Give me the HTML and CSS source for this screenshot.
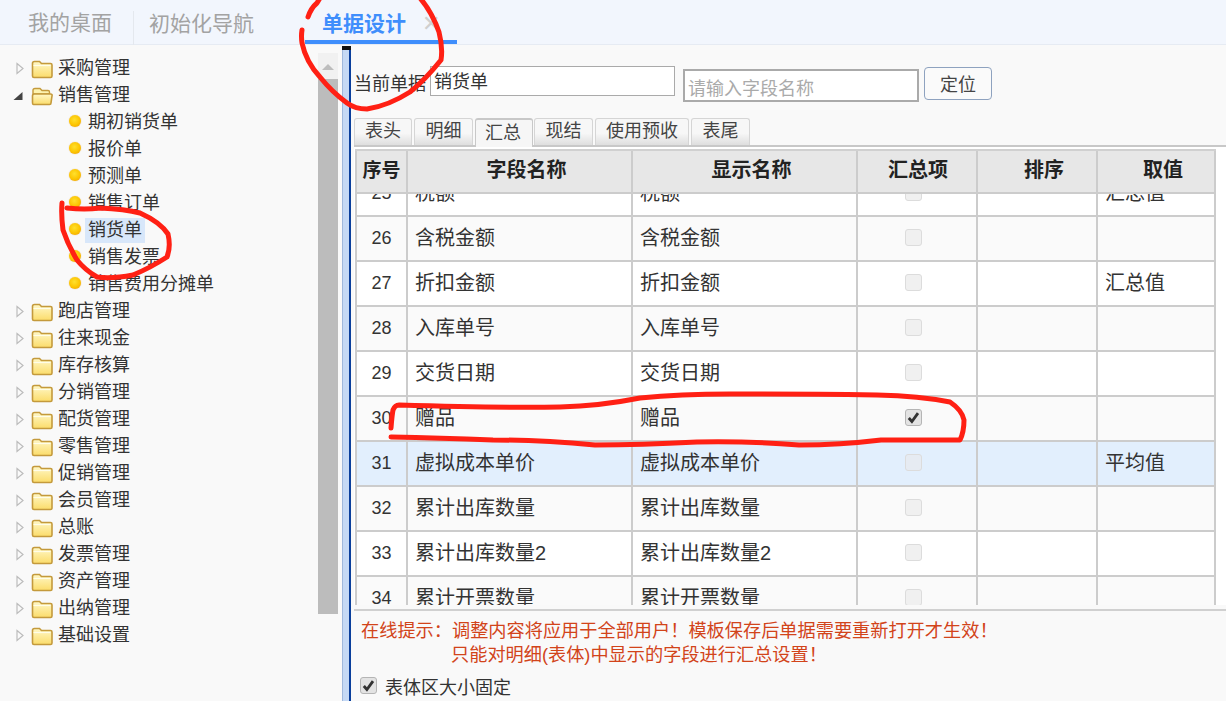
FILE: index.html
```html
<!DOCTYPE html>
<html lang="zh-CN">
<head>
<meta charset="utf-8">
<title>单据设计</title>
<link rel="stylesheet" href="styles.css">
</head>
<body>
<svg width="0" height="0" class="defs">
  <defs>
    <linearGradient id="fg" x1="0" y1="0" x2="0" y2="1"><stop offset="0" stop-color="#fff8c8"/><stop offset="1" stop-color="#fbdc6a"/></linearGradient>
    <symbol id="closed" viewBox="0 0 22 20"><path d="M1.500 4.500q0-2 2-2h5l2 2h9q1.500 0 1.500 1.500v11q0 1.500-1.500 1.500h-16.500q-1.500 0-1.500-1.500z" fill="url(#fg)" stroke="#c49a3c" stroke-width="1.600"/><path d="M2.500 6.500h17" stroke="#fffde8" stroke-width="1.200"/></symbol>
    <symbol id="open" viewBox="0 0 22 20"><path d="M2 4.500q0-2 2-2h5l2 2h6q1.500 0 1.500 1.500v2h-16.500z" fill="#fdf3b0" stroke="#c49a3c" stroke-width="1.400"/><path d="M1.500 16v-6q0-2 2-2h16q2 0 1.500 2l-1 7q0 1.500-1.500 1.500h-16q-1 0-1-2.500z" fill="url(#fg)" stroke="#c49a3c" stroke-width="1.600"/></symbol>
    <symbol id="right" viewBox="0 0 8 12"><path d="M1 1l6 5-6 5z" fill="#fafafa" stroke="#bcbcbc" stroke-width="1.200"/></symbol>
    <symbol id="down" viewBox="0 0 10 10"><path d="M9.500 1v8h-9z" fill="#444"/></symbol>
    <symbol id="tick" viewBox="0 0 16 16"><path d="M3 8.500l3.300 3.800 6.500-9" fill="none" stroke="#333" stroke-width="3"/></symbol>
  </defs>
</svg>
<div class="app">
  <header class="topbar">
    <span class="toptab first">我的桌面</span>
    <span class="toptab second">初始化导航</span>
    <span class="toptab active">单据设计<span class="close">✕</span></span>
  </header>
  <div class="workspace">
    <aside class="sidebar">
      <ul class="tree">
        <li class="node"><svg class="tri"><use href="#right"/></svg><svg class="folder"><use href="#closed"/></svg>采购管理</li>
        <li class="node"><svg class="tri tri-down"><use href="#down"/></svg><svg class="folder"><use href="#open"/></svg>销售管理</li>
        <li class="leaf"><i class="dot"></i><span class="lbl">期初销货单</span></li>
        <li class="leaf"><i class="dot"></i><span class="lbl">报价单</span></li>
        <li class="leaf"><i class="dot"></i><span class="lbl">预测单</span></li>
        <li class="leaf"><i class="dot"></i><span class="lbl">销售订单</span></li>
        <li class="leaf"><i class="dot"></i><span class="lbl sel">销货单</span></li>
        <li class="leaf"><i class="dot"></i><span class="lbl">销售发票</span></li>
        <li class="leaf"><i class="dot"></i><span class="lbl">销售费用分摊单</span></li>
        <li class="node"><svg class="tri"><use href="#right"/></svg><svg class="folder"><use href="#closed"/></svg>跑店管理</li>
        <li class="node"><svg class="tri"><use href="#right"/></svg><svg class="folder"><use href="#closed"/></svg>往来现金</li>
        <li class="node"><svg class="tri"><use href="#right"/></svg><svg class="folder"><use href="#closed"/></svg>库存核算</li>
        <li class="node"><svg class="tri"><use href="#right"/></svg><svg class="folder"><use href="#closed"/></svg>分销管理</li>
        <li class="node"><svg class="tri"><use href="#right"/></svg><svg class="folder"><use href="#closed"/></svg>配货管理</li>
        <li class="node"><svg class="tri"><use href="#right"/></svg><svg class="folder"><use href="#closed"/></svg>零售管理</li>
        <li class="node"><svg class="tri"><use href="#right"/></svg><svg class="folder"><use href="#closed"/></svg>促销管理</li>
        <li class="node"><svg class="tri"><use href="#right"/></svg><svg class="folder"><use href="#closed"/></svg>会员管理</li>
        <li class="node"><svg class="tri"><use href="#right"/></svg><svg class="folder"><use href="#closed"/></svg>总账</li>
        <li class="node"><svg class="tri"><use href="#right"/></svg><svg class="folder"><use href="#closed"/></svg>发票管理</li>
        <li class="node"><svg class="tri"><use href="#right"/></svg><svg class="folder"><use href="#closed"/></svg>资产管理</li>
        <li class="node"><svg class="tri"><use href="#right"/></svg><svg class="folder"><use href="#closed"/></svg>出纳管理</li>
        <li class="node"><svg class="tri"><use href="#right"/></svg><svg class="folder"><use href="#closed"/></svg>基础设置</li>
      </ul>
    </aside>
    <div class="scrollbar"><div class="arrow"></div><div class="thumb"></div></div>
    <div class="splitter"><div class="grip"></div></div>
    <main class="main">
      <div class="formrow">
        <label class="curlabel">当前单据</label>
        <div class="curinput">销货单</div>
        <div class="search">请输入字段名称</div>
        <button class="locate">定位</button>
      </div>
      <nav class="tabs">
        <span class="tab w1">表头</span>
        <span class="tab w2">明细</span>
        <span class="tab w1 on">汇总</span>
        <span class="tab w2 after-on">现结</span>
        <span class="tab w3">使用预收</span>
        <span class="tab w2">表尾</span>
      </nav>
      <div class="grid">
        <div class="grid-head">
          <div class="gh c1">序号</div><div class="gh c2">字段名称</div><div class="gh c2">显示名称</div><div class="gh c3 plain">汇总项</div><div class="gh c3">排序</div><div class="gh c3 lastc">取值</div>
        </div>
        <div class="grid-body">
          <div class="rows">
            <div class="row"><div class="cell c1 num">25</div><div class="cell c2">税额</div><div class="cell c2">税额</div><div class="cell c3 mid"><span class="cb"></span></div><div class="cell c3"></div><div class="cell c3 lastc">汇总值</div></div>
            <div class="row alt"><div class="cell c1 num">26</div><div class="cell c2">含税金额</div><div class="cell c2">含税金额</div><div class="cell c3 mid"><span class="cb"></span></div><div class="cell c3"></div><div class="cell c3 lastc"></div></div>
            <div class="row"><div class="cell c1 num">27</div><div class="cell c2">折扣金额</div><div class="cell c2">折扣金额</div><div class="cell c3 mid"><span class="cb"></span></div><div class="cell c3"></div><div class="cell c3 lastc">汇总值</div></div>
            <div class="row alt"><div class="cell c1 num">28</div><div class="cell c2">入库单号</div><div class="cell c2">入库单号</div><div class="cell c3 mid"><span class="cb"></span></div><div class="cell c3"></div><div class="cell c3 lastc"></div></div>
            <div class="row"><div class="cell c1 num">29</div><div class="cell c2">交货日期</div><div class="cell c2">交货日期</div><div class="cell c3 mid"><span class="cb"></span></div><div class="cell c3"></div><div class="cell c3 lastc"></div></div>
            <div class="row alt"><div class="cell c1 num">30</div><div class="cell c2">赠品</div><div class="cell c2">赠品</div><div class="cell c3 mid"><span class="cb checked"><svg class="tick"><use href="#tick"/></svg></span></div><div class="cell c3"></div><div class="cell c3 lastc"></div></div>
            <div class="row hl"><div class="cell c1 num">31</div><div class="cell c2">虚拟成本单价</div><div class="cell c2">虚拟成本单价</div><div class="cell c3 mid"><span class="cb"></span></div><div class="cell c3"></div><div class="cell c3 lastc">平均值</div></div>
            <div class="row alt"><div class="cell c1 num">32</div><div class="cell c2">累计出库数量</div><div class="cell c2">累计出库数量</div><div class="cell c3 mid"><span class="cb"></span></div><div class="cell c3"></div><div class="cell c3 lastc"></div></div>
            <div class="row"><div class="cell c1 num">33</div><div class="cell c2">累计出库数量2</div><div class="cell c2">累计出库数量2</div><div class="cell c3 mid"><span class="cb"></span></div><div class="cell c3"></div><div class="cell c3 lastc"></div></div>
            <div class="row alt"><div class="cell c1 num">34</div><div class="cell c2">累计开票数量</div><div class="cell c2">累计开票数量</div><div class="cell c3 mid"><span class="cb"></span></div><div class="cell c3"></div><div class="cell c3 lastc"></div></div>
          </div>
        </div>
      </div>
      <div class="tips">
        <div class="tip">在线提示：调整内容将应用于全部用户！模板保存后单据需要重新打开才生效！</div>
        <div class="tip tip2">只能对明细(表体)中显示的字段进行汇总设置！</div>
      </div>
      <div class="fixed"><span class="cb checked"><svg class="tick"><use href="#tick"/></svg></span><span class="fixed-label">表体区大小固定</span></div>
    </main>
  </div>
  <svg class="ink" viewBox="0 0 1226 701" width="1226" height="701">
    <path d="M308 17Q311 8 317 3L320 -2M420 -2Q432 12 439 32Q443 48 441 60Q425 80 410 92Q388 106 367 109Q355 109 347 103Q332 92 320 77Q306 62 302 43Q301 36 302 30"/>
    <path d="M67 208Q85 210 100 208Q125 209 140 213Q160 222 168 234Q171 247 167 257Q150 268 133 275Q112 279 97 277Q85 270 77 260Q68 245 63 230Q61 215 62 203"/>
    <path d="M391 428Q392 415 393 410Q395 405 399 405Q500 408 560 407Q600 406 640 398Q680 394 730 394Q800 394 877 395Q920 396 950 402Q962 410 964 420Q964 432 960 440Q920 440 881 440Q840 445 799 445Q750 441 697 442Q640 445 595 445Q540 440 493 440Q440 438 391 437"/>
  </svg>
</div>
</body>
</html>
```
FILE: styles.css
```css
* { box-sizing: border-box; }
html, body { margin: 0; padding: 0; }
body {
  width: 1226px;
  height: 701px;
  overflow: hidden;
  background: #f9f9f9;
  color: #333;
  font-family: "Liberation Sans", "Noto Sans CJK SC", sans-serif;
  font-size: 18px;
}
.defs { position: absolute; }
.app { position: relative; width: 1226px; height: 701px; display: flex; flex-direction: column; overflow: hidden; }

.topbar {
  height: 45px;
  flex: none;
  background: #f2f6fd;
  border-bottom: 1px solid #e6ebf3;
  display: flex;
  align-items: flex-start;
  padding-left: 28px;
}
.toptab { font-size: 21px; line-height: 46px; color: #a3a3a3; white-space: nowrap; }
.toptab.first { width: 105px; }
.toptab.second { width: 172px; padding-left: 15px; border-left: 1px solid #e4e8ee; height: 34px; margin-top: 11px; line-height: 26px; }
.toptab.active {
  width: 152px;
  height: 44px;
  color: #3f8efc;
  font-weight: 700;
  padding-left: 17px;
  line-height: 48px;
  border-bottom: 4px solid #3f8efc;
}
.close { font-weight: 400; font-size: 22px; color: #cfcfcf; margin-left: 16px; }

.workspace { flex: 1; display: flex; min-height: 0; }
.sidebar { width: 318px; flex: none; padding-top: 10px; overflow: hidden; }
.tree { list-style: none; margin: 0; padding: 0; }
.node, .leaf { height: 27px; line-height: 27px; display: flex; align-items: center; white-space: nowrap; color: #333; }
.node { padding-left: 16px; }
.leaf { padding-left: 69px; }
.tri { width: 8px; height: 13px; margin-right: 7px; flex: none; }
.tri-down { width: 10px; height: 10px; margin-left: -3px; margin-right: 8px; }
.folder { width: 22px; height: 20px; margin-right: 5px; flex: none; }
.dot {
  width: 12px;
  height: 12px;
  border-radius: 50%;
  flex: none;
  background: radial-gradient(circle at 45% 40%, #ffe02e 0, #fcc400 55%, #e89210 100%);
  box-shadow: 0 0 1px #d9a050;
  margin-top: -4px;
  margin-right: 4px;
}
.lbl { padding: 0 3px; height: 25px; line-height: 25px; }
.sel { background: #d8e7fa; }

.scrollbar { width: 24px; flex: none; padding-top: 8px; }
.arrow {
  width: 20px;
  height: 26px;
  background: #f1f1f1;
  position: relative;
}
.arrow::after {
  content: "";
  position: absolute;
  left: 4px;
  top: 11px;
  border-left: 6px solid transparent;
  border-right: 6px solid transparent;
  border-bottom: 6px solid #bdbdbd;
}
.thumb { width: 20px; height: 535px; background: #bcbcbc; }
.splitter {
  width: 9px;
  flex: none;
  background: #c5d9f5;
  border-left: 1px solid #9fb8dc;
  border-right: 2px solid #0a3f9c;
  margin-top: 1px;
}
.grip { height: 4px; background: #111; margin: 0 -2px 0 -1px; }

.main { flex: 1; min-width: 0; padding-top: 21px; padding-left: 3px; }
.formrow { height: 36px; display: flex; align-items: flex-start; }
.curlabel { width: 76px; line-height: 36px; white-space: nowrap; }
.curinput { width: 245px; height: 30px; border: 1px solid #aaa; background: #fff; line-height: 31px; padding-left: 3px; }
.search {
  width: 236px;
  height: 33px;
  margin-left: 8px;
  margin-top: 3px;
  border: 2px solid #aaa;
  background: #fff;
  color: #aaa;
  line-height: 37px;
  padding-left: 3px;
}
.locate {
  width: 68px;
  height: 33px;
  margin-left: 5px;
  margin-top: 1px;
  padding: 0 0 2px;
  border: 1px solid #8ea2bf;
  border-radius: 4px;
  background: #fafafa;
  font: inherit;
  color: #444;
}
.tabs {
  margin-top: 16px;
  height: 29px;
  display: flex;
  align-items: flex-end;
  gap: 2px;
  border-bottom: 2px solid #c8c8c8;
}
.tab {
  height: 27px;
  line-height: 24px;
  text-align: center;
  border: 1px solid #d5d5d5;
  border-bottom: 0;
  border-radius: 3px 3px 0 0;
  background: linear-gradient(#f7f7f7 0, #f7f7f7 55%, #dedede 100%);
  color: #444;
}
.w1 { width: 58px; }
.w2 { width: 59px; }
.w3 { width: 94px; }
.tab.on { height: 29px; margin-bottom: -2px; background: #f6f6f6; border-color: #c8c8c8; border-top-width: 2px; line-height: 26px; padding-right: 2px; }
.after-on { margin-left: -1px; }

.grid { background: #fff; padding: 2px 0 0 1px; }
.grid-head, .row { display: flex; width: fit-content; }
.grid-head { height: 45px; border-top: 2px solid #d0d0d0; font-weight: 700; font-size: 20px; background: #e7e7e7; border-bottom: 2px solid #ccc; }
.c1 { width: 51px; flex: none; }
.c2 { width: 225px; flex: none; }
.c3 { width: 120px; flex: none; }
.gh { border-left: 2px solid #ccc; text-align: center; line-height: 38px; color: #222; padding-left: 14px; white-space: nowrap; }
.gh.plain { padding-left: 2px; }
.gh.c1 { line-height: 40px; font-size: 19px; padding-left: 0; }
.gh.lastc, .cell.lastc { border-right: 2px solid #ccc; }
.grid-body { height: 411px; overflow: hidden; }
.rows { margin-top: -22px; }
.row { height: 45px; border-bottom: 2px solid #ccc; background: #fff; }
.row.alt { background: #fafafa; }
.row.hl { background: #e2effd; }
.cell { border-left: 2px solid #ccc; padding-left: 7px; line-height: 43px; color: #333; white-space: nowrap; font-size: 20px; }
.cell.num { padding-left: 0; text-align: center; font-size: 18px; line-height: 43px; }
.cell.mid { padding-left: 0; padding-right: 7px; padding-bottom: 3px; display: flex; align-items: center; justify-content: center; }
.cb {
  display: inline-block;
  width: 17px;
  height: 17px;
  border: 1px solid #dcdcdc;
  border-radius: 3px;
  background: #f0f0f0;
  flex: none;
}
.row.hl .cb { background: #e6ebf2; }
.cb.checked, .row .cb.checked { background: #e3e3e3; border-color: #b5b5b5; }
.tick { width: 15px; height: 15px; display: block; }
.tips { margin-top: 4px; border-top: 2px solid #d0d0d0; padding: 8px 0 0 7px; color: #d2441a; font-size: 18.2px; }
.tip { height: 24px; line-height: 24px; white-space: nowrap; }
.tip2 { padding-left: 90px; }
.fixed { display: flex; align-items: center; gap: 8px; margin: 5px 0 0 6px; height: 26px; }
.fixed-label { margin-top: 2px; }
.ink { position: absolute; left: 0; top: 0; pointer-events: none; }
.ink path { fill: none; stroke: #ff2014; stroke-width: 5; stroke-linecap: round; stroke-linejoin: round; }
```
